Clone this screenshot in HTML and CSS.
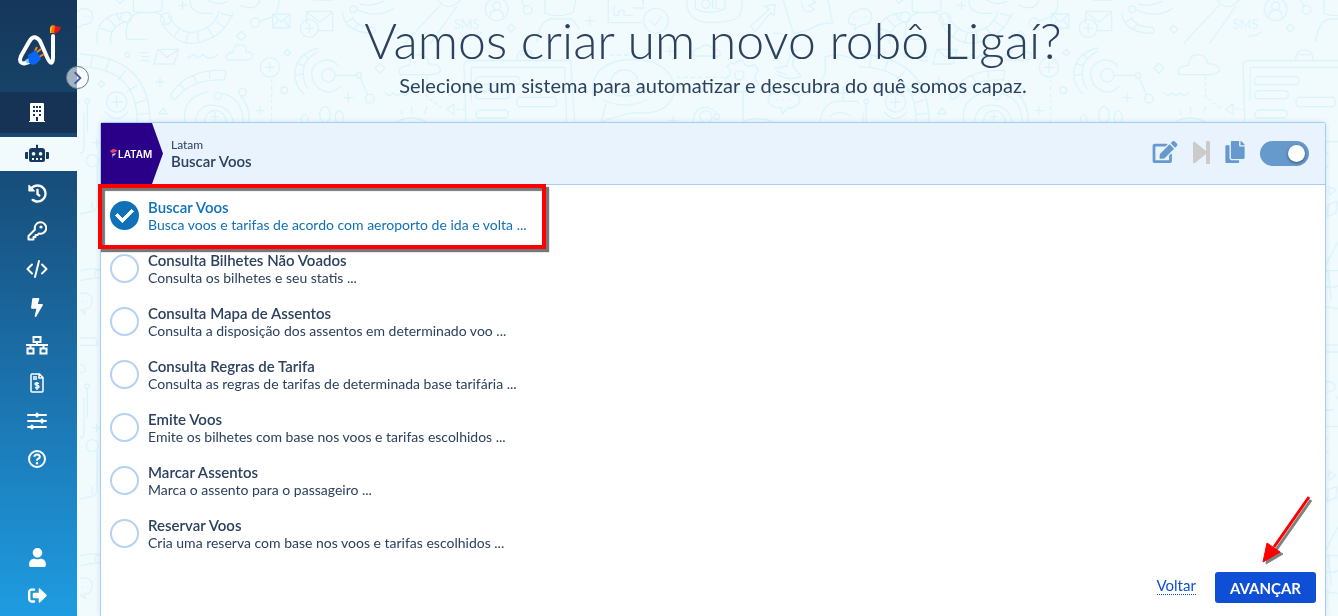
FILE: index.html
```html
<!DOCTYPE html>
<html lang="pt-BR">
<head>
    <meta charset="UTF-8">
    <meta name="viewport" content="width=device-width, initial-scale=1.0">
    <title>Novo robô Ligaí</title>
    <link rel="stylesheet" href="styles.css">
</head>
<body>

    <!-- Doodle wallpaper -->
    <svg class="wallpaper" aria-hidden="true">
        <defs>
            <pattern id="doodles" width="2337" height="2337" patternUnits="userSpaceOnUse" patternTransform="translate(80 0) scale(0.3333)">
                <g fill="none" stroke="#dcf3fc" stroke-width="4" stroke-linecap="round" stroke-linejoin="round">
                    <!-- top strip -->
                    <path d="M0 28q38-8 38 22 0 24-30 24l-8 8M8 50h1M18 50h1M28 50h1"/>
                    <path d="M110 0l10 10 12-10M52 130q-10-80 75-92M92 130q-6-50 48-66M62 85l35 12M84 55l22 24M110 42l10 20"/>
                    <circle cx="139" cy="52" r="16"/><circle cx="258" cy="56" r="17"/>
                    <path d="M160 0v34q40 8 86-2V0M140 118q-8-70 40-80h50q20 8 24 30M140 118h60M248 74q50 74 120 50 60-14 92-84M266 50q40 60 84 44 56-12 66-60M284 106l16-22M318 124l8-26M356 126l-4-30M400 112l-16-26M436 84l-26-18M458 50l-34-10"/>
                    <path d="M330 0q0 36 40 40h30M385 0q30 20 58 4M480 16q50 20 60-16M308 4v24M296 16h24M597 0q0 30-12 44"/>
                    <circle cx="525" cy="68" r="14"/>
                    <path d="M538 64l40-14M578 42h52v42h-52zM578 42l26 24 26-24M578 84l18-26M630 84l-18-26M680 70V34h78v58h-44M680 36l40 30 38-30"/>
                    <circle cx="688" cy="85" r="27"/>
                    <path d="M688 72v26M675 85h26M484 94l14 14-14 14-14-14zM702 0h58M788 38q6 60 90 62 16-8 2-18-50 0-62-30M800 66l18-10M824 86l12-14"/>
                    <circle cx="820" cy="28" r="10"/>
                    <path d="M830 28q60 30 110-2M840 12q30 10 70-8M945 76l12 12-12 12-12-12zM1076 0q24 40 66 0M1080 16L975 130M1130 20l-78 110M1170 108q20 2 36-12"/>
                    <circle cx="1250" cy="28" r="34"/><circle cx="1250" cy="18" r="12"/><path d="M1230 50q0-20 20-20t20 20M1294 72l12 12-12 12-12-12z"/>
                    <circle cx="1343" cy="30" r="13"/><path d="M1335 20l-10-20M1395 0v40q40 16 86-4l6-36M1370 125q10-70 50-68h50q18 6 26 30M1530 48v28M1516 62h28"/>
                    <path d="M1585 0v68h100M1602 20v26h14v-14h16v14h26M1660 24h34M1690 0v16"/>
                    <circle cx="1728" cy="62" r="37"/><path d="M1712 62l12 14 22-26M1820 0q0 56 50 66 60 6 102-12 16-14 14-54M1846 0v26q40 22 90 0V0"/>
                    <path d="M2012 78l56-50-14-10 32-4-4 34-10-10-46 56zM2110 0l30 100q40-4 76-26l42-6-14-68M2165 10q8 40 38 18l-16-12 20-8q-16-22-42-8M2306 68q0-40 44-36 24 8 20 30-8 16-34 16l-12 12 2-16q-16 0-20-6M2322 54h1M2336 54h1M2080 100h26"/>
                    <!-- main rows -->
                    <circle cx="142" cy="164" r="7"/>
                    <path d="M180 158h24M186 170h20M182 182h24M234 148h62l-14 44h-60zM234 148l26 24 36-24M324 174l16-10 14 10 14-10 14 10 16 0 14-10"/>
                    <path d="M440 178q-6-20 20-22 0-24 22-22 20 4 16 22 22-2 20 16-8 10-30 8h-40q-6 0-8-2M622 148l10 10-10 10-10-10z"/>
                    <path d="M0 162q210 10 210 204M0 200q172 4 172 166M38 164l-6 36M88 180l-12 32M136 214l-20 24M170 256l-28 18M196 300l-30 10M206 340l-34 4"/>
                    <circle cx="110" cy="306" r="30"/>
                    <path d="M110 290v32M94 306h32M76 336q34 40 68 0M64 242l10 10-10 10-10-10zM240 234v24M228 246h24M236 342l14-18 12 18z"/>
                    <path d="M272 284q50-80 166-72l-4 28q-98-4-144 54-12 12-18-10M300 254l14 14M340 226l10 20M388 212l2 24"/>
                    <path d="M314 366q-8-74 68-90M424 280q62 10 66 86M346 366q8-56 60-50 44 4 54 50M374 366q4-38 40-34 22 8 26 34M405 338v24M393 350h24M480 286q30 30 28 80"/>
                    <circle cx="413" cy="288" r="11"/><circle cx="488" cy="277" r="11"/>
                    <circle cx="570" cy="202" r="29"/><path d="M570 188v28M556 202h28M540 320v24M528 332h24"/>
                    <path d="M575 240v126" stroke-dasharray="8 12"/>
                    <circle cx="613" cy="271" r="10"/>
                    <path d="M716 144q-66 16-72 76 2 40 28 62M716 154q-48 24-46 66 0 30 14 46M650 190l20 6M648 226l20-4M672 162l14 14M780 260q-40 36-76-8-26-50 22-70 34-8 50 18M766 226h66"/>
                    <circle cx="745" cy="226" r="20"/><circle cx="837" cy="226" r="8"/><circle cx="870" cy="296" r="13"/>
                    <path d="M841 234l22 50M900 190l15 15-15 15-15-15zM805 280v26M792 293h26M960 222q-10-22 28-26 4-34 30-32 26 2 28 28 34-2 36 20-10 14-40 12h-70q-8 2-12-2"/>
                    <ellipse cx="735" cy="344" rx="16" ry="24"/><ellipse cx="778" cy="352" rx="12" ry="20"/><ellipse cx="674" cy="358" rx="10" ry="14"/>
                    <path d="M916 278l12 10 12-10 12 10 12-10 12 10 12-10M965 330v14M995 320v20M1040 320l-6 20M950 366q40-24 90 0M1100 328l22-16v32z"/>
                    <path d="M1040 230v60l50 38M1130 328h28" stroke-dasharray="8 10"/>
                    <path d="M1158 366l-6-176 10-8h310l12 184M1174 300v-98h280l6 164M1194 230h120q14 12 0 24h-124q-10-12 4-24zM1196 272h86q14 12 0 24h-90q-10-12 4-24zM1196 330h82q14 12 0 24h-86q-10-12 4-24zM1316 292h108q12 14 0 28h-108q-10-14 0-28z"/>
                    <path d="M1310 180q0-30 26-30t26 30M1322 164h30M1540 300q-20-104 92-120 130-10 152 78-4 90-116 80-40 4-104 28l14-54M1590 270q0-60 44-60t44 60q-4 18-44 18t-44-18zM1570 300q64 30 130 0"/>
                    <path d="M1770 140v28M1756 154h28M1840 168q-6-20 20-24 20-20 40 4 24 0 20 20h-76"/>
                    <path d="M1590 165h90M1790 232h150" stroke-dasharray="10 12"/>
                    <path d="M1966 186l22-6 6 14 14 6 16-6 12 18-10 12v16l10 12-16 14-14-4-12 14h-18l-4-16-16-6-14 2-6-20 14-10v-14l-8-12 10-12 14 4z"/><circle cx="1978" cy="226" r="14"/>
                    <path d="M2084 206l36-8 10-30 12 0-4 30 26 32q-40 14-72-6M2090 214l30 10M2236 170l40-6 70 18v80q-50 30-140 10l30-50zM2064 300q0-26 50-24 40 0 46 22-2 26-38 26l-14 18-4-18q-36-2-40-24M2090 300h1M2110 300h1M2130 300h1"/>
                    <circle cx="1878" cy="350" r="18"/><circle cx="1910" cy="350" r="8"/>
                    <path d="M1840 366q0-44 40-44 26 6 30 20M1780 350v24M1768 362h24M1990 366q40-20 90 0M2220 366q10-64 60-62h50q16 8 24 62M2250 348q30-20 62 0M2290 260v40M1990 270v90"/>
                    <!-- columns down the page edges, repeated once -->
                    <g id="edges">
                        <circle cx="22" cy="304" r="7"/><circle cx="37" cy="482" r="18"/>
                        <path d="M22 312v84M12 340v110q-4 10-12 8M52 500v110q0 24-24 26l-28 6M36 626v-20M50 416v26M38 428h24"/>
                        <path d="M0 812q30-8 60-4M0 842q30-6 52-8M0 880q40-6 36 26-2 24-24 20l4 16-16-14M8 906h1M22 904h1"/>
                        <circle cx="56" cy="822" r="12"/>
                        <path d="M0 1014h44q8 6 8 22H0M0 1094q16 0 16 12t-16 12"/>
                        <path d="M1400 425h60M1402 460h6M1402 500h6M1410 560l22 10-20 16zM1408 614l26-10-2 34-26 12zM1398 800l42-80M1398 812h40M1398 860q24 6 42-4M1408 812l10 90M1398 920l40 6M1398 1035h60M1398 1056h60M1398 1146q30-4 30 14t-30 16M1432 1190l10 12M1398 1230h26"/>
                    </g>
                    <use href="#edges" y="855"/>
                </g>
                <text x="1122" y="88" class="doodle-text">SMS</text>
                <text x="1862" y="26" class="doodle-text">OIL</text>
            </pattern>
        </defs>
        <rect width="100%" height="100%" fill="url(#doodles)"/>
    </svg>

    <nav class="sidebar" aria-label="Menu principal">
        <div class="sidebar-logo">
            <svg width="46" height="46" viewBox="0 0 46 46" aria-label="Ligaí">
                <path d="M13 38L8 39.500Q2 39 5 32L13 18Q18 9 24 17L31 33Q36 44 37 34V12" fill="none" stroke="#fff" stroke-width="4" stroke-linecap="round" stroke-linejoin="round"/>
                <path d="M10 38l5-3" stroke="#7cc4ff" stroke-width="4"/>
                <path d="M20 29l5-4M23 33l5-3M19 27l2-4" stroke="#f08a1d" stroke-width="2"/>
                <path d="M12 31l8-5 5 9-5 5q-4 2-7-1z" fill="#0b66f5"/>
                <path d="M34 9V4q0-2 3-3v8z" fill="#ffc420"/>
                <path d="M36 1l4 1-1 7h-4z" fill="#ff7a00"/>
                <path d="M39 2l6 1q-1 5-7 7z" fill="#e8131b"/>
            </svg>
        </div>
        <a class="nav-item nav-company" href="#" aria-label="Empresa">
            <svg width="16" height="20" viewBox="0 0 16 20"><path fill="#fff" fill-rule="evenodd" d="M1 1q0-1 1-1h12q1 0 1 1v17h1v1H0v-1h1zM4 3v2h2V3zM7 3v2h2V3zM10 3v2h2V3zM4 7v2h2V7zM7 7v2h2V7zM10 7v2h2V7zM4 11v2h2v-2zM10 11v2h2v-2zM7 14v4h2v-4z"/></svg>
        </a>
        <div class="nav-edge"></div>
        <a class="nav-item nav-active" href="#" aria-label="Robôs" aria-current="page">
            <svg width="24" height="20" viewBox="0 0 24 20"><path fill="#163a5f" fill-rule="evenodd" d="M11 1q1-1 2 0v3h4q3 0 3 3v9q0 2-2 2H6q-2 0-2-2V7q0-3 3-3h4zM8.500 8a1.800 1.800 0 1 0 .1 0zM15.500 8a1.800 1.800 0 1 0 .1 0zM7 14v2h2v-2zM11 14v2h2v-2zM15 14v2h2v-2zM1 8h2v7H1q-1 0-1-1V9q0-1 1-1zM21 8h2q1 0 1 1v5q0 1-1 1h-2z"/></svg>
        </a>
        <div class="nav-list">
            <a class="nav-item" href="#" aria-label="Histórico">
                <svg width="19" height="19" viewBox="0 0 512 512"><path fill="#fff" d="M504 255.531c.253 136.640-111.180 248.372-247.820 248.468-59.015.042-113.223-20.530-155.822-54.911-11.077-8.940-11.905-25.541-1.839-35.607l11.267-11.267c8.609-8.609 22.353-9.551 31.891-1.984C173.062 425.135 212.781 440 256 440c101.705 0 184-82.311 184-184 0-101.705-82.311-184-184-184-48.814 0-93.149 18.969-126.068 49.932l50.754 50.754c10.080 10.080 2.941 27.314-11.313 27.314H24c-8.837 0-16-7.163-16-16V38.627c0-14.254 17.234-21.393 27.314-11.314l49.372 49.372C129.209 34.136 189.552 8 256 8c136.810 0 247.747 110.780 248 247.531zm-180.912 78.784l9.823-12.630c8.138-10.463 6.253-25.542-4.210-33.679L288 256.349V152c0-13.255-10.745-24-24-24h-16c-13.255 0-24 10.745-24 24v135.651l65.409 50.874c10.463 8.137 25.541 6.253 33.679-4.210z"/></svg>
            </a>
            <a class="nav-item" href="#" aria-label="Credenciais">
                <svg width="20" height="20" viewBox="0 0 20 20"><path d="M8 8.500A5.700 5.700 0 1 1 12 12.500L10.500 14H8.500v2H6.500v2.500H1.500V15z" fill="none" stroke="#fff" stroke-width="2" stroke-linejoin="round"/><circle cx="14" cy="6" r="1.600" fill="#fff"/></svg>
            </a>
            <a class="nav-item" href="#" aria-label="Código">
                <svg width="22" height="20" viewBox="0 0 22 20" fill="none" stroke="#fff" stroke-width="2" stroke-linecap="round" stroke-linejoin="round"><path d="M6 5.500L1.500 10 6 14.500M16 5.500l4.500 4.500-4.500 4.500M13 2L9 18"/></svg>
            </a>
            <a class="nav-item" href="#" aria-label="Gatilhos">
                <svg width="12" height="19" viewBox="0 0 320 512"><path fill="#fff" d="M296 160H180.600l42.600-129.800C227.200 15 215.700 0 200 0H56C44 0 33.800 8.900 32.200 20.800l-32 240C-1.700 275.200 9.500 288 24 288h118.700L96.600 482.500c-3.600 15.200 8 29.500 23.300 29.500 8.400 0 16.400-4.400 20.800-12l176-304c9.300-15.900-2.200-36-20.700-36z"/></svg>
            </a>
            <a class="nav-item" href="#" aria-label="Fluxos">
                <svg width="24" height="20" viewBox="0 0 24 20" fill="none" stroke="#fff" stroke-width="2"><path d="M8.500 2h7v5h-7zM2.500 13.500h6v5h-6zM15.500 13.500h6v5h-6zM12 7v3M1 10h22M5.500 10v3M18.500 10v3"/></svg>
            </a>
            <a class="nav-item" href="#" aria-label="Faturas">
                <svg width="14" height="20" viewBox="0 0 14 20"><path d="M1 2q0-1 1-1h7.500L13 4.500V18q0 1-1 1H2q-1 0-1-1zM9 1v4h4M3 4h4M3 6h4" fill="none" stroke="#fff" stroke-width="1.500"/><path d="M9 10.500q-4-1.500-4 .5 0 1 2 1.300t2 1.500q0 1.700-4 .7M7 9v8" fill="none" stroke="#fff" stroke-width="1.400"/></svg>
            </a>
            <a class="nav-item" href="#" aria-label="Configurações">
                <svg width="20" height="18" viewBox="0 0 20 18" fill="none" stroke="#fff" stroke-width="2" stroke-linecap="round"><path d="M1 3h18M1 9h18M1 15h18"/><path d="M10 2v2M15 8v2M5 14v2" stroke-width="3"/></svg>
            </a>
            <a class="nav-item" href="#" aria-label="Ajuda">
                <svg width="20" height="20" viewBox="0 0 20 20" fill="none" stroke="#fff"><circle cx="10" cy="10" r="8" stroke-width="2"/><path d="M7.200 7.800Q7.800 5.500 10 5.500q2.800.1 2.800 2.300 0 1.400-1.500 2T10 11.500v.3" stroke-width="2"/><circle cx="10" cy="14.200" r=".6" stroke-width="1.400"/></svg>
            </a>
        </div>
        <div class="nav-list nav-bottom">
            <a class="nav-item" href="#" aria-label="Perfil">
                <svg width="17" height="19" viewBox="0 0 448 512"><path fill="#fff" d="M224 256c70.700 0 128-57.300 128-128S294.700 0 224 0 96 57.300 96 128s57.300 128 128 128zm89.600 32h-16.700c-22.200 10.200-46.900 16-72.900 16s-50.600-5.800-72.900-16h-16.700C60.200 288 0 348.200 0 422.400V464c0 26.500 21.500 48 48 48h352c26.500 0 48-21.500 48-48v-41.600c0-74.200-60.200-134.400-134.400-134.400z"/></svg>
            </a>
            <a class="nav-item" href="#" aria-label="Sair">
                <svg width="19" height="19" viewBox="0 0 512 512"><path fill="#fff" d="M497 273L329 441c-15 15-41 4.500-41-17v-96H152c-13.300 0-24-10.700-24-24v-96c0-13.300 10.700-24 24-24h136V88c0-21.400 25.900-32 41-17l168 168c9.300 9.400 9.300 24.600 0 34zM192 436v-40c0-6.600-5.400-12-12-12H96c-17.700 0-32-14.300-32-32V160c0-17.700 14.300-32 32-32h84c6.600 0 12-5.400 12-12V76c0-6.600-5.400-12-12-12H96c-53 0-96 43-96 96v192c0 53 43 96 96 96h84c6.600 0 12-5.400 12-12z"/></svg>
            </a>
        </div>
        <button class="sidebar-toggle" aria-label="Expandir menu">
            <svg width="22" height="22" viewBox="0 0 22 22" fill="none" stroke-width="2"><path d="M8 5l6 6-6 6" stroke="#4a5cae"/></svg>
        </button>
    </nav>

    <main class="main-container">
        <header class="page-title">
            <h1>Vamos criar um novo robô Ligaí?</h1>
            <p>Selecione um sistema para automatizar e descubra do quê somos capaz.</p>
        </header>

        <section class="panel">
            <div class="panel-header">
                <div class="brand">
                    <svg width="7" height="10" viewBox="0 0 7 10"><path d="M0 2l3-2 4 1-1 2-4 1z" fill="#f0416c"/><path d="M2 5l4-1-1 2-2 1v3z" fill="#c9b4e8"/></svg>
                    <span>LATAM</span>
                </div>
                <div class="panel-name">
                    <span>Latam</span>
                    <strong>Buscar Voos</strong>
                </div>
                <div class="panel-actions">
                    <button class="icon-btn" aria-label="Editar">
                        <svg width="26" height="22" viewBox="0 0 576 512"><path fill="#6699cc" d="M402.600 83.200l90.200 90.200c3.800 3.800 3.800 10 0 13.800L274.400 405.600l-92.800 10.300c-12.400 1.400-22.900-9.100-21.500-21.500l10.300-92.800L388.800 83.200c3.800-3.800 10-3.800 13.800 0zm162-22.900l-48.800-48.800c-15.200-15.200-39.900-15.200-55.200 0l-35.400 35.400c-3.800 3.800-3.800 10 0 13.800l90.200 90.200c3.800 3.800 10 3.800 13.800 0l35.400-35.400c15.200-15.300 15.200-40 0-55.200zM384 346.200V448H64V128h229.800c3.200 0 6.200-1.300 8.500-3.500l40-40c7.600-7.600 2.200-20.500-8.500-20.500H48C21.500 64 0 85.500 0 112v352c0 26.500 21.500 48 48 48h352c26.500 0 48-21.500 48-48V306.200c0-10.700-12.900-16-20.500-8.500l-40 40c-2.200 2.300-3.500 5.300-3.500 8.500z"/></svg>
                    </button>
                    <button class="icon-btn" aria-label="Executar" disabled>
                        <svg width="17" height="23" viewBox="0 0 17 23"><path fill="#cbcbcb" d="M0 2q0-2 2-1l11 9V1q0-1 1-1h2q1 0 1 1v21q0 1-1 1h-2q-1 0-1-1v-9L2 22q-2 1-2-1z"/></svg>
                    </button>
                    <button class="icon-btn" aria-label="Copiar">
                        <svg width="20" height="22" viewBox="0 0 448 512"><path fill="#6699cc" d="M320 448v40c0 13.255-10.745 24-24 24H24c-13.255 0-24-10.745-24-24V120c0-13.255 10.745-24 24-24h72v296c0 30.879 25.121 56 56 56h168zm0-344V0H152c-13.255 0-24 10.745-24 24v368c0 13.255 10.745 24 24 24h272c13.255 0 24-10.745 24-24V128H344c-13.200 0-24-10.800-24-24zm120.971-31.029L375.029 7.029A24 24 0 0 0 358.059 0H352v96h96v-6.059a24 24 0 0 0-7.029-16.970z"/></svg>
                    </button>
                    <input type="checkbox" class="switch" aria-label="Ativo" checked>
                </div>
            </div>

            <form class="options">
                <label class="option option-marked">
                    <input type="radio" name="service" checked>
                    <span><strong>Buscar Voos</strong>Busca voos e tarifas de acordo com aeroporto de ida e volta ...</span>
                </label>
                <label class="option">
                    <input type="radio" name="service">
                    <span><strong>Consulta Bilhetes Não Voados</strong>Consulta os bilhetes e seu statis ...</span>
                </label>
                <label class="option">
                    <input type="radio" name="service">
                    <span><strong>Consulta Mapa de Assentos</strong>Consulta a disposição dos assentos em determinado voo ...</span>
                </label>
                <label class="option">
                    <input type="radio" name="service">
                    <span><strong>Consulta Regras de Tarifa</strong>Consulta as regras de tarifas de determinada base tarifária ...</span>
                </label>
                <label class="option">
                    <input type="radio" name="service">
                    <span><strong>Emite Voos</strong>Emite os bilhetes com base nos voos e tarifas escolhidos ...</span>
                </label>
                <label class="option">
                    <input type="radio" name="service">
                    <span><strong>Marcar Assentos</strong>Marca o assento para o passageiro ...</span>
                </label>
                <label class="option">
                    <input type="radio" name="service">
                    <span><strong>Reservar Voos</strong>Cria uma reserva com base nos voos e tarifas escolhidos ...</span>
                </label>
            </form>

            <div class="panel-footer">
                <a class="back-link" href="#">Voltar</a>
                <button class="next-btn">AVANÇAR</button>
                <svg class="arrow" width="54" height="72" viewBox="0 0 54 72" aria-hidden="true">
                    <g fill="#808080" stroke="#808080"><path d="M51 5L16 55" stroke-width="3"/><path d="M6 69l3-18 14 8z"/></g>
                    <g fill="#f00" stroke="#f00"><path d="M49 2L14 52" stroke-width="3"/><path d="M3 67l4-19 13 9z"/></g>
                </svg>
            </div>
        </section>
    </main>

</body>
</html>
```
FILE: styles.css
```css
*, *::before, *::after {
    box-sizing: border-box;
}
body {
    font-family: Lato, "Liberation Sans", sans-serif;
    font-size: 15px;
    line-height: 18px;
    color: #2b415e;
    background-color: #f1fbfe;
    margin: 0;
    display: flex;
    height: 100vh;
    overflow: hidden;
}
.wallpaper {
    position: fixed;
    inset: 0;
    width: 100%;
    height: 100%;
    z-index: -1;
}
.doodle-text {
    font-family: Lato, sans-serif;
    font-size: 38px;
    fill: #dcf3fc;
}

/* Sidebar */
.sidebar {
    position: relative;
    width: 77px;
    flex-shrink: 0;
    display: flex;
    flex-direction: column;
    background: linear-gradient(#16365a, #174d79 28%, #1b6fa9 60%, #1e9ce1);
}
.sidebar-logo {
    height: 92px;
    padding: 24px 0 0 16px;
    background: linear-gradient(#15375b, #174267);
}
.nav-item {
    height: 38px;
    padding-right: 3px;
    display: flex;
    align-items: center;
    justify-content: center;
}
.nav-company {
    height: 41px;
    background-color: #163356;
}
.nav-edge {
    height: 4px;
}
.nav-active {
    height: 34px;
    background-color: #f1fbfe;
}
.nav-list {
    padding-top: 3px;
}
.nav-bottom {
    margin-top: auto;
    padding-bottom: 2px;
}
.sidebar-toggle {
    position: absolute;
    top: 66px;
    right: -12px;
    width: 23px;
    height: 23px;
    padding: 0;
    display: flex;
    align-items: center;
    justify-content: center;
    background-color: rgba(255, 255, 255, 0.6);
    border: 1px solid #5f7891;
    border-radius: 50%;
    cursor: pointer;
}

/* Content */
.main-container {
    flex-grow: 1;
    display: flex;
    flex-direction: column;
    padding: 8px 12px 0 23px;
}
.page-title {
    height: 114px;
    text-align: center;
}
.page-title h1 {
    margin: 0;
    font-size: 50px;
    line-height: 64px;
    font-weight: 300;
}
.page-title p {
    margin: 0;
    font-size: 20px;
    line-height: 26px;
}
.panel {
    flex-grow: 1;
    display: flex;
    flex-direction: column;
    background-color: #fff;
    border: 1px solid #a6cdf2;
    border-bottom: 0;
    border-radius: 3px 3px 0 0;
    box-shadow: 0 0 5px rgba(60, 120, 170, 0.2);
}
.panel-header {
    height: 62px;
    display: flex;
    align-items: center;
    background-color: #e9f3fe;
    border-bottom: 1px solid #a6cdf2;
}
.brand {
    width: 62px;
    height: 61px;
    padding-left: 9px;
    display: flex;
    align-items: center;
    gap: 1px;
    background-color: #2a0088;
    clip-path: polygon(0 0, 51px 0, 100% 50%, 51px 100%, 0 100%);
}
.brand span {
    font-family: Inter, sans-serif;
    font-size: 10px;
    font-weight: 600;
    color: #fff;
}
.panel-name {
    flex-grow: 1;
    padding-left: 8px;
    display: flex;
    flex-direction: column;
}
.panel-name span {
    font-size: 12px;
    line-height: 15px;
}
.panel-actions {
    display: flex;
    align-items: flex-start;
    gap: 15px;
    padding-right: 16px;
}
.icon-btn {
    padding: 0;
    display: flex;
    background: none;
    border: none;
    cursor: pointer;
}
.switch {
    appearance: none;
    width: 49px;
    height: 25px;
    margin: 0;
    padding: 4px;
    display: flex;
    justify-content: flex-end;
    background-color: #6699cc;
    border-radius: 13px;
    cursor: pointer;
}
.switch::before {
    content: "";
    width: 17px;
    height: 17px;
    background-color: #fff;
    border-radius: 50%;
    box-shadow: 0 1px 3px rgba(0, 0, 0, 0.5);
}

/* Options */
.options {
    padding-top: 4px;
}
.option {
    position: relative;
    height: 53px;
    padding-left: 9px;
    display: flex;
    align-items: center;
    gap: 9px;
    font-size: 14px;
    cursor: pointer;
}
.option strong {
    display: block;
    font-size: 15px;
}
strong {
    font-weight: 600;
}
.option input {
    appearance: none;
    width: 29px;
    height: 29px;
    margin: 0;
    border: 2px solid #b4d2f4;
    border-radius: 50%;
}
.option input:checked {
    display: flex;
    align-items: center;
    justify-content: center;
    border: none;
    background-color: #1071b8;
}
.option input:checked::before {
    content: "";
    width: 17px;
    height: 11px;
    margin-bottom: 5px;
    border-left: 4px solid #fff;
    border-bottom: 4px solid #fff;
    border-radius: 1px;
    transform: rotate(-45deg);
}
.option-marked {
    color: #1071b8;
}
.option-marked::after {
    content: "";
    position: absolute;
    top: -5px;
    left: -3px;
    width: 448px;
    height: 65px;
    border: 4px solid #f00;
    box-shadow: 3px 3px 1px #777, inset 3px 3px 1px #777;
    z-index: 1;
}

/* Footer */
.panel-footer {
    position: relative;
    margin-top: auto;
    padding: 0 9px 13px;
    display: flex;
    align-items: flex-start;
    justify-content: flex-end;
    gap: 19px;
}
.back-link {
    padding-top: 4px;
    color: #0f4fd6;
    text-decoration: none;
    border-bottom: 1px dotted #0f4fd6;
}
.next-btn {
    height: 31px;
    padding: 0 15px;
    font-family: inherit;
    font-size: 15px;
    font-weight: 700;
    color: #fff;
    background-color: #0f4fd6;
    border: none;
    border-radius: 3px;
    cursor: pointer;
}
.arrow {
    position: absolute;
    right: 11px;
    bottom: 49px;
}
```
